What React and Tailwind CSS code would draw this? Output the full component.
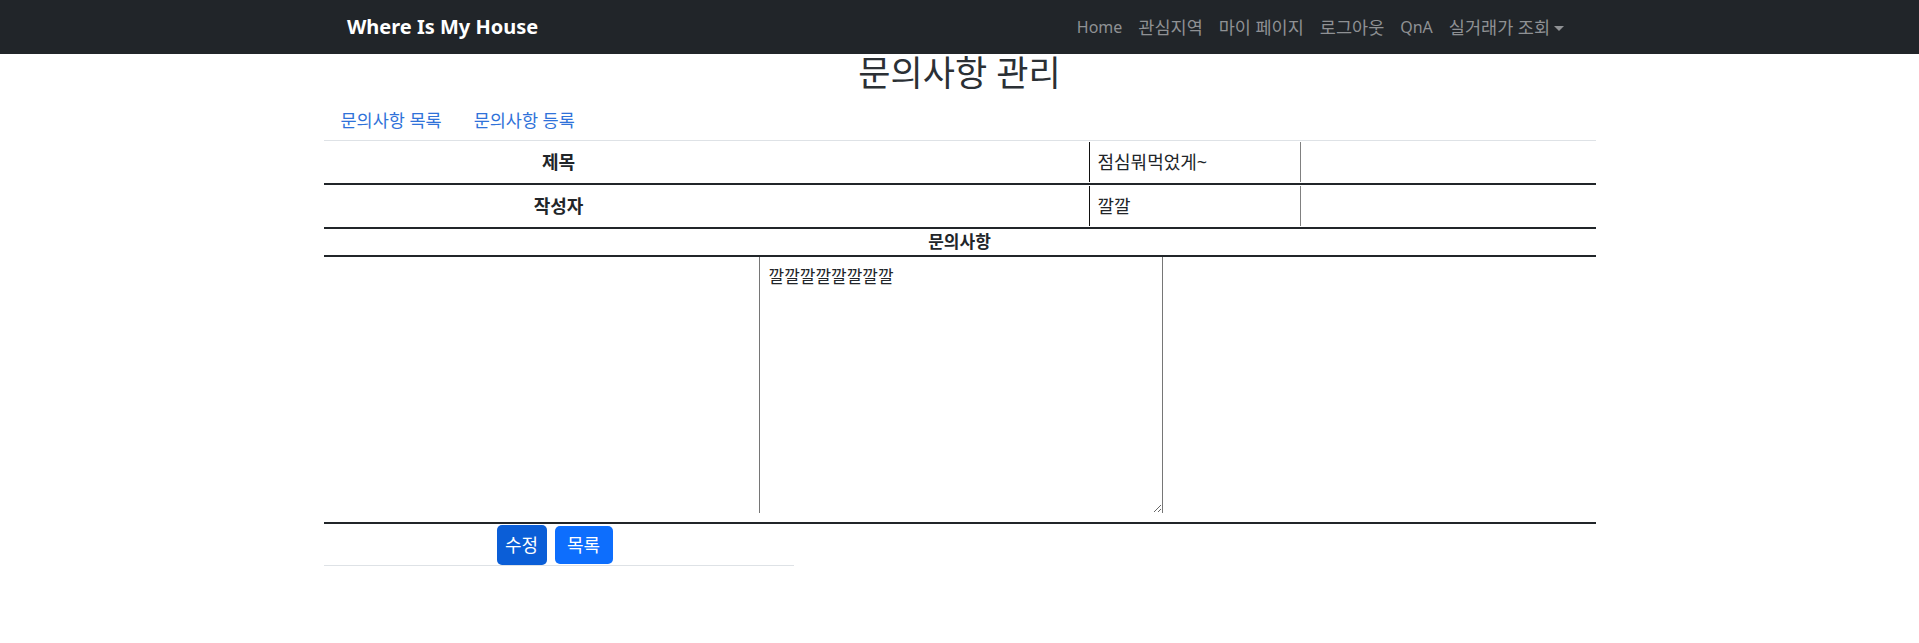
import React from "react";

const FONT = { fontFamily: '"Noto Sans", "Noto Sans CJK KR", sans-serif' };

function NavLink({ children, caret, ko }) {
  return (
    <li
      className={
        "px-2 leading-6 text-[#8f9194] flex items-center whitespace-nowrap " +
        (ko ? "text-[17.5px]" : "text-[16px]")
      }
    >
      {children}
      {caret && (
        <span className="ml-[4px] inline-block w-0 h-0 border-t-[5px] border-t-[#8f9194] border-x-[5px] border-x-transparent mt-[2px]" />
      )}
    </li>
  );
}

export default function App() {
  return (
    <div className="min-h-screen bg-white text-[#212529]" style={FONT}>
      <nav className="h-[54px] bg-[#212529]">
        <div className="w-[1225px] mx-auto h-full flex items-center justify-between">
          <span className="text-white text-[20px] font-bold leading-[30px]">Where Is My House</span>
          <ul className="flex items-center">
            <NavLink>Home</NavLink>
            <NavLink ko>관심지역</NavLink>
            <NavLink ko>마이 페이지</NavLink>
            <NavLink ko>로그아웃</NavLink>
            <NavLink>QnA</NavLink>
            <NavLink ko caret>실거래가 조회</NavLink>
          </ul>
        </div>
      </nav>

      <div className="w-[1272px] mx-auto">
        <h2 className="text-[35px] leading-[38px] font-normal text-center mb-2 text-[#2b3035] h-[38px]">문의사항 관리</h2>

        <div className="flex border-b border-[#dee2e6] h-[41px]">
          <span className="px-4 pl-[17px] h-10 flex items-center text-[17.5px] leading-6 text-[#2f72d9]">문의사항 목록</span>
          <span className="px-4 h-10 flex items-center text-[17.5px] leading-6 text-[#2f72d9]">문의사항 등록</span>
        </div>

        {/* Row 1 */}
        <div className="flex h-[44px] border-b-2 border-[#212529]">
          <div className="w-[470px] flex items-center justify-center font-bold text-[18px] leading-6">제목</div>
          <div className="w-[295px]" />
          <div className="w-[212px] my-px h-[40px] border-l border-l-[#111] border-r border-r-[#808080] flex items-center pl-[8px] text-[18px] leading-6">점심뭐먹었게~</div>
          <div className="flex-1" />
        </div>

        {/* Row 2 */}
        <div className="flex h-[44px] border-b-2 border-[#212529]">
          <div className="w-[470px] flex items-center justify-center font-bold text-[18px] leading-6">작성자</div>
          <div className="w-[295px]" />
          <div className="w-[212px] my-px h-[40px] border-l border-l-[#111] border-r border-r-[#808080] flex items-center pl-[8px] text-[18px] leading-6">깔깔</div>
          <div className="flex-1" />
        </div>

        {/* Row 3 */}
        <div className="h-[28px] border-b-2 border-[#212529] flex items-center justify-center font-bold text-[17px] leading-6">문의사항</div>

        {/* Row 4 */}
        <div className="h-[267px] border-b-2 border-[#212529] flex">
          <textarea
            readOnly
            value="깔깔깔깔깔깔깔깔"
            className="ml-[435px] w-[404px] h-[256px] border-x border-y-0 border-[#767676] pl-[9px] pt-2 text-[17px] leading-6 text-[#212529] outline-none resize bg-white"
            style={FONT}
          />
        </div>

        {/* Row 5 */}
        <div className="w-[470px] h-[42px] border-b border-[#dee2e6] flex items-center justify-center pr-[8px] gap-2">
          <button className="w-[50px] h-[40px] rounded-[5px] bg-[#0b5ed7] text-white text-[18px] leading-6 flex items-center justify-center">수정</button>
          <button className="w-[58px] h-[38px] rounded-[5px] bg-[#0d6efd] text-white text-[18px] leading-6 flex items-center justify-center">목록</button>
        </div>
      </div>
    </div>
  );
}
